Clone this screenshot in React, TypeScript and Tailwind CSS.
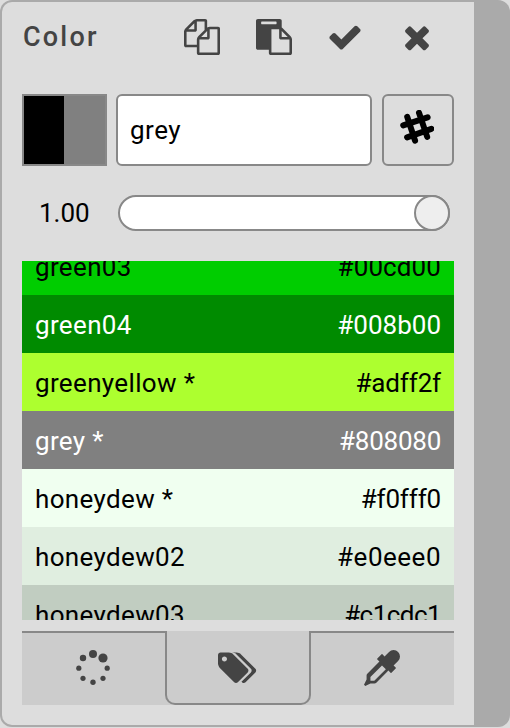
import React from "react";

const DOCS =
  "M1696 384q40 0 68 28t28 68v1216q0 40-28 68t-68 28h-960q-40 0-68-28t-28-68v-288h-544q-40 0-68-28t-28-68v-672q0-40 20-88t48-76l408-408q28-28 76-48t88-20h416q40 0 68 28t28 68v328q68-40 128-40h416zm-544 213l-299 299h299v-299zm-640-384l-299 299h299v-299zm196 647l316-316v-416h-384v416q0 40-28 68t-68 28h-416v640h512v-256q0-40 20-88t48-76zm956 804v-1152h-384v416q0 40-28 68t-68 28h-416v640h896z";
const PASTE =
  "M768 1664h896v-640h-416q-40 0-68-28t-28-68v-416h-384v1152zm256-1440v-64q0-13-9.5-22.5t-22.5-9.5h-704q-13 0-22.5 9.5t-9.5 22.5v64q0 13 9.5 22.5t22.5 9.5h704q13 0 22.5-9.5t9.5-22.5zm256 672h299l-299-299v299zm512 128v672q0 40-28 68t-68 28h-960q-40 0-68-28t-28-68v-160h-544q-40 0-68-28t-28-68v-1344q0-40 28-68t68-28h1088q40 0 68 28t28 68v328q21 13 36 28l408 408q28 28 48 76t20 88z";
const CHECK =
  "M1671 566q0 40-28 68l-724 724-136 136q-28 28-68 28t-68-28l-136-136-362-362q-28-28-28-68t28-68l136-136q28-28 68-28t68 28l294 295 656-657q28-28 68-28t68 28l136 136q28 28 28 68z";
const TIMES =
  "M1490 1322q0 40-28 68l-136 136q-28 28-68 28t-68-28l-294-294-294 294q-28 28-68 28t-68-28l-136-136q-28-28-28-68t28-68l294-294-294-294q-28-28-28-68t28-68l136-136q28-28 68-28t68 28l294 294 294-294q28-28 68-28t68 28l136 136q28 28 28 68t-28 68l-294 294 294 294q28 28 28 68z";
const TAGS =
  "M448 448q0-53-37.5-90.5t-90.5-37.5-90.5 37.5-37.5 90.5 37.5 90.5 90.5 37.5 90.5-37.5 37.5-90.5zm1067 576q0 53-37 90l-491 492q-39 37-91 37-53 0-90-37l-715-716q-38-37-64.5-101t-26.5-117v-416q0-52 38-90t90-38h416q53 0 117 26.5t102 64.5l715 714q37 39 37 91zm384 0q0 53-37 90l-491 492q-39 37-91 37-36 0-59-14t-53-45l470-470q37-37 37-90 0-52-37-91l-715-714q-38-38-102-64.5t-117-26.5h224q53 0 117 26.5t102 64.5l715 714q37 39 37 91z";
const DROPPER =
  "M1698 94q94 94 94 226.5t-94 225.5l-225 223 104 104q10 10 10 23t-10 23l-210 210q-10 10-23 10t-23-10l-105-105-603 603q-37 37-90 37h-203l-256 128-64-64 128-256v-203q0-53 37-90l603-603-105-105q-10-10-10-23t10-23l210-210q10-10 23-10t23 10l104 104 223-225q93-94 225.5-94t226.5 94zm-1186 1442l576-576-192-192-576 576v192h192z";

function Icon({ d }: { d: string }) {
  return (
    <svg viewBox="0 0 1792 1792" className="size-9 shrink-0 overflow-visible fill-[#444]">
      <path d={d} />
    </svg>
  );
}

function Spinner() {
  return (
    <svg viewBox="0 0 36 36" className="size-9 fill-[#444]">
      <circle cx="18" cy="4" r="4" />
      <circle cx="28" cy="8" r="4.6" />
      <circle cx="32.2" cy="18.2" r="2.6" />
      <circle cx="28" cy="28.3" r="2.6" />
      <circle cx="18" cy="32.3" r="2.7" />
      <circle cx="8" cy="28.3" r="2.6" />
      <circle cx="3.8" cy="18.2" r="2.6" />
      <circle cx="8" cy="8" r="3.2" />
    </svg>
  );
}

const rows = [
  { name: "green03", hex: "#00cd00", style: "bg-[#00cd00] text-black", track: "tracking-[0.1px]" },
  { name: "green04", hex: "#008b00", style: "bg-[#008b00] text-white", track: "tracking-normal" },
  { name: "greenyellow *", hex: "#adff2f", style: "bg-[#adff2f] text-black", track: "tracking-[-0.15px]" },
  { name: "grey *", hex: "#808080", style: "bg-[#808080] text-white", track: "tracking-[-0.25px]" },
  { name: "honeydew *", hex: "#f0fff0", style: "bg-[#f0fff0] text-black", track: "tracking-[-0.15px]" },
  { name: "honeydew02", hex: "#e0eee0", style: "bg-[#e0eee0] text-black", track: "tracking-[0.5px]" },
  { name: "honeydew03", hex: "#c1cdc1", style: "bg-[#c1cdc1] text-black", track: "tracking-[-0.55px]" },
];

export default function App() {
  return (
    <div className="h-[728px] w-[510px] bg-[#ddd] font-['Roboto',sans-serif] text-[26px] leading-none text-black">
      <div className="h-[727px] w-[510px] overflow-hidden rounded-xl bg-[#aaa] pt-0.5 pl-0.5">
        <div className="flex h-[723px] w-[472px] flex-col rounded-l-[10px] bg-[#ddd] pr-5 pl-5">
          <header className="flex h-[70px] shrink-0 items-center">
            <h1 className="w-[162px] pl-px text-[27px] font-medium tracking-[2.2px] text-[#444]">Color</h1>
            <div className="flex gap-[35.7px]">
              <Icon d={DOCS} />
              <Icon d={PASTE} />
              <Icon d={CHECK} />
              <Icon d={TIMES} />
            </div>
          </header>

          <div className="mt-[22px] flex h-[72px] shrink-0">
            <div className="flex w-[85px] border-2 border-[#888] bg-[#808080]">
              <div className="w-10 bg-black" />
            </div>
            <div className="ml-[9px] flex w-64 items-center rounded-md border-2 border-[#888] bg-white pl-3 tracking-[0.5px]">
              grey
            </div>
            <button className="ml-[10px] flex w-[72px] items-center justify-center rounded-md border-2 border-[#888] pr-0.5 pb-1.5">
              <svg viewBox="0 0 34 34" className="size-[34px] fill-none stroke-black stroke-[6]" strokeLinecap="round">
                <path d="M7.2 6.8 15.1 30.7M19 2.8 27.2 26.9M3.2 15.4 27.6 7.3M7.1 27.3 31.4 18.8" />
              </svg>
            </button>
          </div>

          <div className="mt-[29px] flex h-9 shrink-0 items-center">
            <div className="w-24 pb-px pl-[17px]">1.00</div>
            <div className="flex h-9 w-[332px] justify-end rounded-full border-2 border-[#888] bg-white">
              <div className="-my-0.5 -mr-0.5 size-9 rounded-full border-2 border-[#888] bg-[#eee]" />
            </div>
          </div>

          <div className="mt-[30px] flex h-[359px] shrink-0 flex-col overflow-hidden">
            <div className="-mt-6">
              {rows.map((r) => (
                <div key={r.name} className={`flex h-[58px] items-center justify-between px-[13px] pt-0.5 ${r.style}`}>
                  <span className="tracking-[0.35px]">{r.name}</span>
                  <span className={r.track}>{r.hex}</span>
                </div>
              ))}
            </div>
          </div>

          <nav className="mt-[11px] flex h-[74px] shrink-0 bg-[#ccc]">
            <div className="flex w-[143px] items-center justify-center border-t-2 border-[#888] pr-0.5 pb-0.5">
              <Spinner />
            </div>
            <div className="flex w-[146px] items-center rounded-b-[10px] border-x-2 border-b-2 border-[#888] pt-px pl-[51px]">
              <Icon d={TAGS} />
            </div>
            <div className="flex w-[143px] items-center justify-center border-t-2 border-[#888] pr-0.5 pb-0.5">
              <Icon d={DROPPER} />
            </div>
          </nav>
        </div>
      </div>
    </div>
  );
}
